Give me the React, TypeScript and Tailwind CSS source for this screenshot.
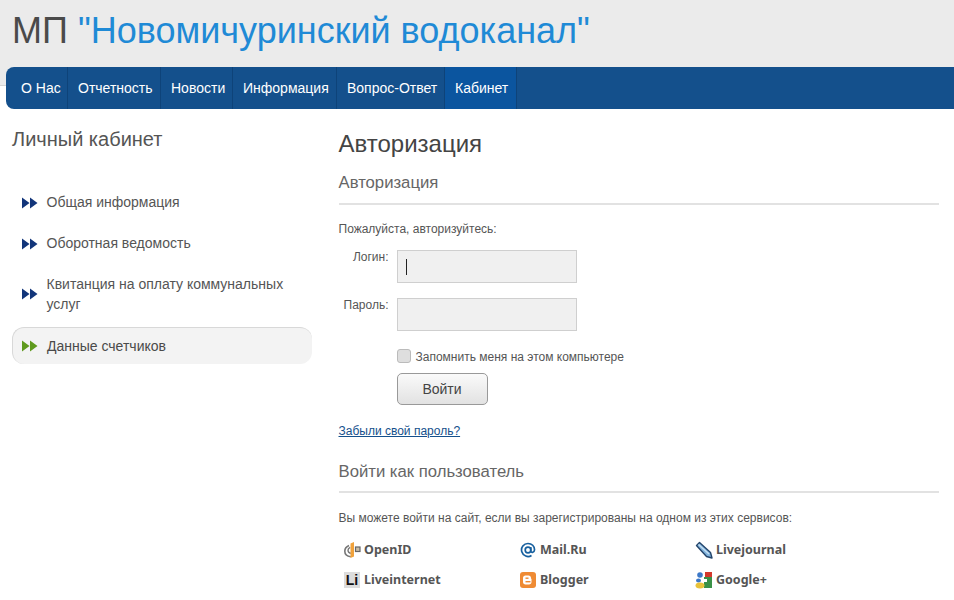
const navItems = [
  { label: 'О Нас', width: 'w-[62px]', pad: 'pl-[15px]' },
  { label: 'Отчетность', width: 'w-[93px]', pad: 'pl-[10px]' },
  { label: 'Новости', width: 'w-[72px]', pad: 'pl-[10px]' },
  { label: 'Информация', width: 'w-[104px]', pad: 'pl-[10px]' },
  { label: 'Вопрос-Ответ', width: 'w-[108px]', pad: 'pl-[10px]' },
];

function Arrows({ green }: { green?: boolean }) {
  return (
    <svg width="17" height="12" viewBox="0 0 17 12" className={green ? 'text-[#5f9a1e] shrink-0' : 'text-[#12357a] shrink-0'}>
      <path d="M1 0.500l7.500 5.500-7.500 5.500zM9 0.500l7.500 5.500-7.500 5.500z" fill="currentColor" />
    </svg>
  );
}

function OpenIdIcon() {
  return (
    <svg width="17" height="16" viewBox="0 0 17 16" className="shrink-0">
      <path d="M5 3.500C2.200 4.700 .8 6.800 .8 9.200c0 2.800 2.500 5 6 5.600" fill="none" stroke="#777" strokeWidth="1.600" />
      <path d="M6.800 11.500c-1.700-.6-2.800-1.800-2.800-3.300 0-1.200.8-2.200 2.200-2.900" fill="none" stroke="#777" strokeWidth="1.400" />
      <path d="M6.500 1.500L10 0v14.500L6.500 16z" fill="#f0a23c" />
      <rect x="11.500" y="5" width="4.500" height="4.500" fill="#c9bda8" stroke="#666" strokeWidth="1.200" />
    </svg>
  );
}

function MailIcon() {
  return (
    <svg width="16" height="16" viewBox="0 0 16 16" className="shrink-0">
      <circle cx="8" cy="8" r="2.800" fill="none" stroke="#17609f" strokeWidth="1.700" />
      <path d="M10.800 5v4c0 2 3.500 2 3.700-1 .2-4-2.800-6.500-6.500-6.500a6.500 6.500 0 1 0 3.500 12" fill="none" stroke="#17609f" strokeWidth="1.700" />
    </svg>
  );
}

function LivejournalIcon() {
  return (
    <svg width="18" height="18" viewBox="0 0 18 18" className="shrink-0">
      <path d="M1.500 4.500l3-3 11 10 1.500 5.500-5.500-1.500z" fill="#7fb2dc" stroke="#24456b" strokeWidth="1.400" strokeLinejoin="round" />
      <path d="M3.500 3.500l10.500 9.500" stroke="#c9e0f2" strokeWidth="1.200" />
    </svg>
  );
}

function LiIcon() {
  return (
    <div className="flex h-[16px] w-[16px] shrink-0 items-center justify-center bg-[#dcdcdc] font-['Liberation_Sans',sans-serif] text-[14px] leading-none font-bold text-[#111]">
      Li
    </div>
  );
}

function BloggerIcon() {
  return (
    <svg width="16" height="16" viewBox="0 0 16 16" className="shrink-0">
      <rect width="16" height="16" rx="3" fill="#ef8b34" />
      <path d="M5.500 3.500h3c1.500 0 2.500 1 2.500 2.500v.8h.5v3.200c0 1.500-1 2.500-2.500 2.500h-3.500c-1.500 0-2.500-1-2.500-2.500v-4c0-1.500 1-2.500 2.500-2.500z" fill="#fff" />
      <rect x="5.500" y="5.500" width="3" height="1.400" fill="#ef8b34" />
      <rect x="5.500" y="9" width="5" height="1.400" fill="#ef8b34" />
    </svg>
  );
}

function GoogleIcon() {
  return (
    <svg width="18" height="18" viewBox="0 0 18 18" className="shrink-0">
      <rect x="10" y="1" width="7" height="5" fill="#d3382c" />
      <rect x="9" y="6" width="8" height="11" fill="#3a9147" />
      <path d="M9 8h3v3H9z" fill="#fff" />
      <circle cx="5" cy="4" r="2.800" fill="#3c78c8" />
      <ellipse cx="3.500" cy="9.500" rx="2.500" ry="2" fill="#3c78c8" />
      <ellipse cx="5" cy="14.500" rx="4.500" ry="3" fill="#e8c23a" />
    </svg>
  );
}

const providers = [
  { name: 'OpenID', icon: <OpenIdIcon />, gap: 'gap-[3px]' },
  { name: 'Mail.Ru', icon: <MailIcon />, gap: 'gap-[4px]' },
  { name: 'Livejournal', icon: <LivejournalIcon />, gap: 'gap-[3px]' },
  { name: 'Liveinternet', icon: <LiIcon />, gap: 'gap-[4px]' },
  { name: 'Blogger', icon: <BloggerIcon />, gap: 'gap-[4px]' },
  { name: 'Google+', icon: <GoogleIcon />, gap: 'gap-[3px]' },
];

export default function App() {
  return (
    <div className="h-[600px] w-[954px] overflow-hidden bg-white font-['Liberation_Sans',sans-serif] text-[#555]">
      {/* Header */}
      <div className="h-[86px] border-b border-[#d5d5d5] bg-[#ebebeb] pt-[11px] pl-[12px]">
        <h1 className="text-[36px] leading-[40px] font-normal text-[#4a4a4a]">
          МП <span className="text-[#1f8ad6]">"Новомичуринский водоканал"</span>
        </h1>
      </div>

      {/* Nav */}
      <nav className="relative -mt-[19px] ml-[6px] flex h-[42px] rounded-l-[8px] bg-[#14508c] text-[14px] text-white">
        {navItems.map((item) => (
          <a key={item.label} className={`flex h-full items-center border-r border-[#0e4379] ${item.width} ${item.pad}`}>
            {item.label}
          </a>
        ))}
        <a className="flex h-full w-[72px] items-center border-r border-[#0e4379] bg-[#0b559f] pl-[10px]">Кабинет</a>
      </nav>

      <div className="flex">
        {/* Sidebar */}
        <aside className="ml-[12px] w-[300px] shrink-0">
          <h2 className="mt-[19px] text-[20px] leading-[22px] font-normal text-[#555]">Личный кабинет</h2>
          <ul className="mt-[32px] text-[14px] text-[#555]">
            <li className="flex h-[41px] items-center gap-[9px] pl-[8.500px]"><Arrows />Общая информация</li>
            <li className="flex h-[41px] items-center gap-[9px] pl-[8.500px]"><Arrows />Оборотная ведомость</li>
            <li className="flex h-[60px] items-center gap-[9px] pl-[8.500px] leading-[20px]">
              <Arrows />
              <span>Квитанция на оплату коммунальных<br />услуг</span>
            </li>
            <li className="mt-[3px] flex h-[37px] items-center gap-[9px] rounded-[12px] border-t border-l border-[#d8d8d8] bg-[#f3f3f3] pl-[8px] text-[#4a4a4a]">
              <Arrows green />Данные счетчиков
            </li>
          </ul>
        </aside>

        {/* Main */}
        <main className="ml-[26.500px] w-[600px]">
          <h2 className="mt-[21px] text-[24px] leading-[28px] font-normal text-[#444]">Авторизация</h2>
          <h3 className="mt-[15px] border-b-2 border-[#e2e2e2] pb-[10px] text-[16.700px] leading-[20px] font-normal text-[#666]">Авторизация</h3>

          <p className="mt-[17px] text-[12px] leading-[14px] text-[#555]">Пожалуйста, авторизуйтесь:</p>

          <div className="mt-[14px] flex gap-[8px] text-[12px]">
            <label className="w-[50px] text-right leading-[14px]">Логин:</label>
            <div className="flex h-[33px] w-[180px] items-center border border-[#cfcfcf] bg-[#f0f0f0] pl-[8px]">
              <div className="h-[16px] w-px bg-[#222]" />
            </div>
          </div>
          <div className="mt-[15px] flex gap-[8px] text-[12px]">
            <label className="w-[50px] text-right leading-[14px]">Пароль:</label>
            <div className="h-[33px] w-[180px] border border-[#cfcfcf] bg-[#f0f0f0]" />
          </div>

          <div className="mt-[15px] ml-[58px] flex items-center gap-[5px] text-[12px] leading-[16px]">
            <div className="h-[14px] w-[14px] rounded-[3px] border border-[#bbb] bg-[#dedede]" />
            <span className="mt-[3px]">Запомнить меня на этом компьютере</span>
          </div>

          <button className="mt-[8px] ml-[58px] block h-[32px] w-[91px] rounded-[5px] border border-[#999] bg-gradient-to-b from-[#fafafa] to-[#e2e2e2] text-[14px] text-[#444]">
            Войти
          </button>

          <a className="mt-[19px] block text-[12px] leading-[14px] text-[#14508c] underline">Забыли свой пароль?</a>

          <h3 className="mt-[24px] border-b-2 border-[#e2e2e2] pb-[9px] text-[16.700px] leading-[20px] font-normal text-[#666]">Войти как пользователь</h3>

          <p className="mt-[18px] text-[12px] leading-[14px] text-[#555]">Вы можете войти на сайт, если вы зарегистрированы на одном из этих сервисов:</p>

          <div className="mt-[16px] grid w-[530px] grid-cols-[176px_175px_1fr] gap-y-[12px] pl-[5.500px] font-['Noto_Sans',sans-serif] text-[12.500px] leading-[18px] font-bold text-[#555]">
            {providers.map((p) => (
              <div key={p.name} className={`flex h-[18px] items-center ${p.gap}`}>
                {p.icon}
                {p.name}
              </div>
            ))}
          </div>
        </main>
      </div>
    </div>
  );
}
